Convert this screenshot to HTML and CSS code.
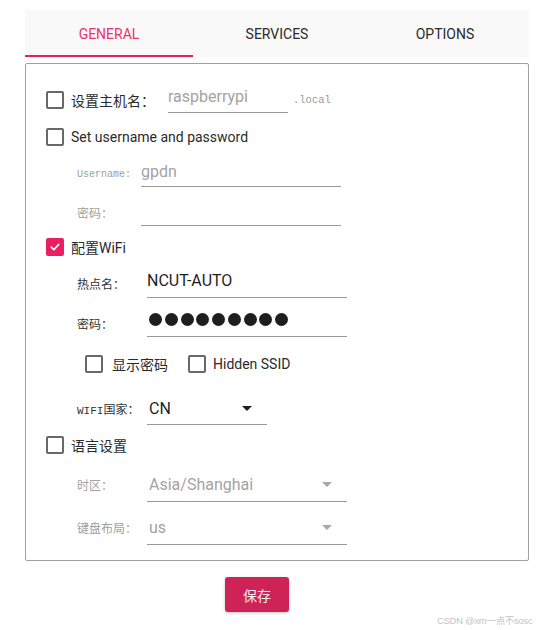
FILE: index.html
```html
<!DOCTYPE html>
<html lang="zh-CN">
<head>
<meta charset="utf-8">
<title>Raspberry Pi Imager - Advanced options</title>
<link rel="stylesheet" href="styles.css">
</head>
<body>
<div class="page">
  <nav class="tabs">
    <div class="tab active">General</div>
    <div class="tab">Services</div>
    <div class="tab">Options</div>
  </nav>

  <section class="panel">
    <div class="row r-host">
      <div class="check shift6">
        <span class="box"></span>
        <span class="lbl host-lbl">设置主机名：</span>
      </div>
      <div class="field w120 muted">raspberrypi</div>
      <span class="suffix shift6">.local</span>
    </div>

    <div class="row r-user check">
      <span class="box"></span>
      <span class="lbl">Set username and password</span>
    </div>

    <div class="row sub r-uname">
      <span class="flabel lw64 muted-lbl shift2"><span class="mono small">Username:</span></span>
      <div class="field w200 h31 muted">gpdn</div>
    </div>

    <div class="row sub r-upw">
      <span class="flabel lw64 muted-lbl shift3">密码：</span>
      <div class="field w200 h31"></div>
    </div>

    <div class="row r-wifi check">
      <span class="box checked">
        <svg viewBox="0 0 18 18" width="18" height="18"><path d="M4.2 9.2 L7.6 12.4 L13.8 5.8" fill="none" stroke="#fff" stroke-width="2.2" stroke-linecap="round" stroke-linejoin="round"/></svg>
      </span>
      <span class="lbl">配置WiFi</span>
    </div>

    <div class="row sub r-ssid">
      <span class="flabel lw70 shift4">热点名：</span>
      <div class="field w200 h34 dark">NCUT-AUTO</div>
    </div>

    <div class="row sub r-wpw">
      <span class="flabel lw70 shift8">密码：</span>
      <div class="field w200 h35">
        <div class="dots">
          <i></i><i></i><i></i><i></i><i></i><i></i><i></i><i></i><i></i>
        </div>
      </div>
    </div>

    <div class="row r-opts">
      <div class="check">
        <span class="box"></span>
        <span class="lbl opt-lbl">显示密码</span>
      </div>
      <div class="check">
        <span class="box"></span>
        <span class="lbl">Hidden SSID</span>
      </div>
    </div>

    <div class="row sub r-country">
      <span class="flabel lw70"><span class="mono">WIFI</span>国家：</span>
      <div class="field w120 h33 select dark">CN<span class="caret"></span></div>
    </div>

    <div class="row r-lang check">
      <span class="box"></span>
      <span class="lbl">语言设置</span>
    </div>

    <div class="row sub r-tz">
      <span class="flabel lw70 muted-lbl">时区：</span>
      <div class="field w200 h35 select muted">Asia/Shanghai<span class="caret light"></span></div>
    </div>

    <div class="row sub r-kb">
      <span class="flabel lw70 muted-lbl">键盘布局：</span>
      <div class="field w200 h35 select muted">us<span class="caret light"></span></div>
    </div>
  </section>

  <div class="actions">
    <button class="save">保存</button>
  </div>

  <div class="watermark">CSDN @xm一点不sosc</div>
</div>
</body>
</html>
```

FILE: styles.css
```css
html, body {
  margin: 0;
  padding: 0;
  overflow: hidden;
  background: #ffffff;
}

body {
  font-family: Roboto, "Noto Sans CJK SC", sans-serif;
  color: #222222;
}

.page {
  position: relative;
  width: 539px;
  height: 630px;
  padding: 10px 10px 0 25px;
  box-sizing: border-box;
}

/* Tabs */
.tabs {
  display: grid;
  grid-template-columns: repeat(3, 1fr);
  height: 47px;
  background: #f9f9f9;
}

.tab {
  display: flex;
  align-items: center;
  justify-content: center;
  font-size: 14px;
  text-transform: uppercase;
  color: #2b2b2b;
  box-sizing: border-box;
}

.tab.active {
  color: #e8336d;
  border-bottom: 2px solid #e91e63;
  padding-top: 2px;
}

/* Panel */
.panel {
  margin-top: 6px;
  border: 1px solid #a0a0a0;
  border-radius: 2px;
  padding: 0 0 15px 20px;
  display: flex;
  flex-direction: column;
}

.row {
  display: flex;
  align-items: center;
}

.check {
  display: flex;
  align-items: center;
}

.box {
  width: 18px;
  height: 18px;
  box-sizing: border-box;
  border: 2px solid #686868;
  border-radius: 2px;
  flex: none;
  display: flex;
  align-items: center;
  justify-content: center;
}

.box.checked {
  background: #e91e63;
  border-color: #e91e63;
}

.box svg {
  display: block;
}

.lbl {
  margin-left: 7px;
  font-size: 14px;
  color: #2a2a2a;
  white-space: nowrap;
}

.host-lbl {
  width: 97px;
}

.suffix {
  font-family: "Liberation Mono", monospace;
  font-size: 10.5px;
  color: #9a9a9a;
  margin-left: 5px;
}

.shift2 { padding-top: 2px; }
.shift3 { padding-top: 3px; }
.shift4 { padding-top: 4px; }
.shift6 { padding-top: 6px; }
.shift8 { padding-top: 8px; }

/* Fields */
.field {
  box-sizing: border-box;
  height: 33px;
  border-bottom: 1px solid #9a9a9a;
  display: flex;
  align-items: center;
  font-size: 16px;
  white-space: nowrap;
}

.w120 { width: 120px; }
.w200 { width: 200px; }
.h31 { height: 31px; }
.h33 { height: 33px; }
.h34 { height: 34px; }
.h35 { height: 35px; }

.field.muted { color: #a3a3a3; }
.field.dark { color: #1f1f1f; }

.select {
  padding-left: 2px;
}

.caret {
  margin-left: auto;
  margin-right: 15px;
  width: 0;
  height: 0;
  border-left: 5px solid transparent;
  border-right: 5px solid transparent;
  border-top: 5px solid #1f1f1f;
}

.caret.light {
  border-top-color: #a8a8a8;
}

.sub {
  padding-left: 31px;
}

.flabel {
  font-size: 12px;
  color: #333333;
  white-space: nowrap;
  flex: none;
}

.flabel.muted-lbl {
  color: #a0a0a0;
}

.lw64 { width: 64px; }
.lw70 { width: 70px; }

.mono {
  font-family: "Liberation Mono", monospace;
  font-size: 11px;
}

.mono.small {
  font-size: 10px;
}

.dots {
  display: flex;
  gap: 2.75px;
  padding-left: 2px;
}

.dots i {
  width: 13px;
  height: 13px;
  border-radius: 50%;
  background: #1e1e1e;
}

/* Row spacing */
.r-host { margin-top: 16px; height: 33px; }
.r-user { margin-top: 15px; height: 18px; }
.r-uname { margin-top: 10px; }
.r-upw { margin-top: 8px; }
.r-wifi { margin-top: 12px; height: 18px; }
.r-ssid { margin-top: 8px; }
.r-wpw { margin-top: 4px; }
.r-opts { margin-top: 18px; height: 18px; padding-left: 39px; gap: 20px; }
.r-country { margin-top: 19px; }
.r-lang { margin-top: 11px; height: 18px; }
.r-tz { margin-top: 13px; }
.r-kb { margin-top: 8px; }

.opt-lbl {
  margin-left: 9px;
  width: 56px;
}

/* Save */
.actions {
  display: flex;
  padding-left: 200px;
  margin-top: 16px;
}

.save {
  width: 64px;
  height: 35px;
  border: none;
  border-radius: 3px;
  background: #cd2356;
  color: #fbe9ef;
  font-family: "Noto Sans CJK SC", sans-serif;
  font-size: 14px;
  box-shadow: 0 1px 3px rgba(0, 0, 0, 0.25);
  padding: 0;
}

.watermark {
  position: absolute;
  left: 437px;
  top: 613px;
  font-family: "Liberation Sans", "Noto Sans CJK SC", sans-serif;
  font-size: 9.5px;
  letter-spacing: -0.3px;
  color: #c4c4c4;
  white-space: nowrap;
}
```
